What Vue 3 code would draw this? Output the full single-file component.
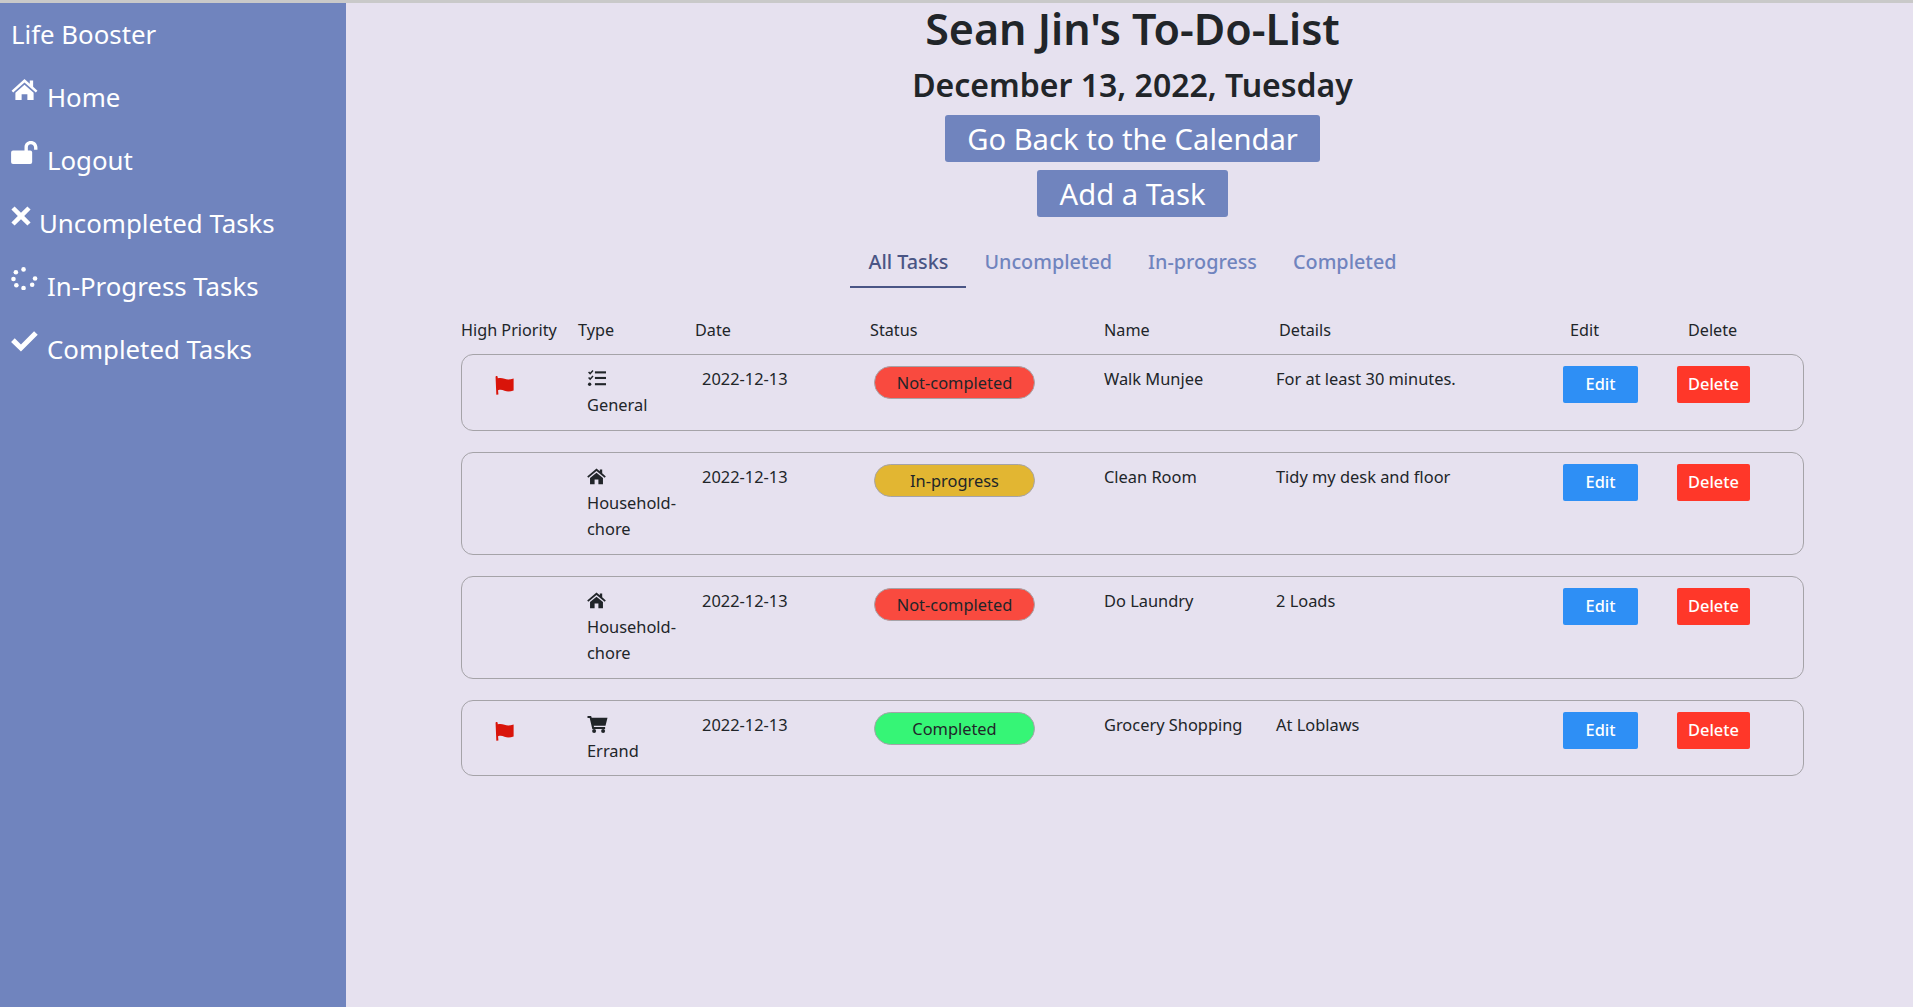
<script setup>
const navItems = [
  { label: "Home", icon: "home" },
  { label: "Logout", icon: "unlock" },
  { label: "Uncompleted Tasks", icon: "remove" },
  { label: "In-Progress Tasks", icon: "dots" },
  { label: "Completed Tasks", icon: "ok" },
];

const tabs = ["All Tasks", "Uncompleted", "In-progress", "Completed"];

const columns = ["High Priority", "Type", "Date", "Status", "Name", "Details", "Edit", "Delete"];

const tasks = [
  { id: 1, flag: true, icon: "list", type: "General", date: "2022-12-13", status: "Not-completed", statusClass: "not", name: "Walk Munjee", details: "For at least 30 minutes." },
  { id: 2, flag: false, icon: "house", type: "Household-chore", date: "2022-12-13", status: "In-progress", statusClass: "prog", name: "Clean Room", details: "Tidy my desk and floor" },
  { id: 3, flag: false, icon: "house", type: "Household-chore", date: "2022-12-13", status: "Not-completed", statusClass: "not", name: "Do Laundry", details: "2 Loads" },
  { id: 4, flag: true, icon: "cart", type: "Errand", date: "2022-12-13", status: "Completed", statusClass: "done", name: "Grocery Shopping", details: "At Loblaws" },
];
</script>

<template>
  <div class="page">
    <aside class="sidebar">
      <div class="brand">Life Booster</div>
      <a v-for="item in navItems" :key="item.label" class="nav__item">
        <svg v-if="item.icon === 'home'" class="nav__icon" viewBox="0 0 28 24" fill="#fff">
          <path d="M14 1 L19.5 6 V2.5 H23 V9.2 L27.5 13.2 L25.8 15 L14 4.6 L2.2 15 L.5 13.2 Z" />
          <path d="M14 7 L23.5 15.3 V23 H17 V17 H11 V23 H4.5 V15.3 Z" />
        </svg>
        <svg v-else-if="item.icon === 'unlock'" class="nav__icon" viewBox="0 0 28 24" fill="#fff">
          <rect x="0" y="10" width="22" height="14" rx="2" />
          <path d="M14 11 V6.5 C14 2.5 17 0 20.5 0 C24.5 0 27.5 2.8 27.5 7 V9 H24 V7 C24 4.8 22.5 3.4 20.5 3.4 C18.8 3.4 17.5 4.8 17.5 6.5 V11 Z" />
        </svg>
        <svg v-else-if="item.icon === 'remove'" class="nav__icon nav__icon--small" viewBox="0 0 20 20" fill="#fff">
          <path d="M3.6 .4 L10 6.8 L16.4 .4 L19.6 3.6 L13.2 10 L19.6 16.4 L16.4 19.6 L10 13.2 L3.6 19.6 L.4 16.4 L6.8 10 L.4 3.6 Z" />
        </svg>
        <svg v-else-if="item.icon === 'dots'" class="nav__icon" viewBox="0 0 28 24" fill="#fff">
          <circle cx="13" cy="2.5" r="2.4" />
          <circle cx="5" cy="5.5" r="2.4" />
          <circle cx="2.5" cy="12.5" r="2.4" />
          <circle cx="5.5" cy="19" r="2.4" />
          <circle cx="13" cy="22" r="2.4" />
          <circle cx="22" cy="18.5" r="2.4" />
          <circle cx="25" cy="12" r="2.4" />
        </svg>
        <svg v-else class="nav__icon" viewBox="0 0 28 24" fill="#fff">
          <path d="M0 12.5 L3.8 8.7 L10.3 15 L24 1.2 L27.8 5 L10.3 22.5 Z" />
        </svg>
        <span>{{ item.label }}</span>
      </a>
    </aside>

    <main class="content">
      <header class="head">
        <h1 class="title">Sean Jin's To-Do-List</h1>
        <h2 class="date">December 13, 2022, Tuesday</h2>
        <button class="btn-main">Go Back to the Calendar</button>
        <button class="btn-main btn-main--add">Add a Task</button>
      </header>

      <nav class="tabs">
        <a v-for="(tab, i) in tabs" :key="tab" class="tab" :class="{ 'tab--active': i === 0 }">{{ tab }}</a>
      </nav>

      <section class="table">
        <div class="table__head">
          <span v-for="col in columns" :key="col">{{ col }}</span>
        </div>

        <div v-for="task in tasks" :key="task.id" class="row">
          <div class="row__flag">
            <svg v-if="task.flag" class="flag" viewBox="0 0 20 20" fill="#d9140a">
              <path d="M.6 1 C.6 -.2 2.8 -.2 2.8 1 L2.9 2.4 C5.5 1.6 7.5 2 10 3 C13 4.2 16 3.8 19.6 2.6 V15.2 C16 16.4 13 16.6 10 15.4 C7.5 14.4 5.4 14.2 3.2 15 L3.6 19.6 L1.4 19.8 Z" />
            </svg>
          </div>
          <div class="row__type">
            <svg v-if="task.icon === 'list'" class="type-icon" viewBox="0 0 18 16" fill="#212529">
              <path d="M1 2.3 L2 1.4 L3 2.4 L5.2 0 L6.2 1 L3 4.4 Z M1 7.5 L2 6.6 L3 7.6 L5.2 5.2 L6.2 6.2 L3 9.6 Z" />
              <circle cx="2.5" cy="13.5" r="1.6" />
              <rect x="7.5" y="1.2" width="10.5" height="2" />
              <rect x="7.5" y="6.5" width="10.5" height="2" />
              <rect x="7.5" y="12.4" width="10.5" height="2" />
            </svg>
            <svg v-else-if="task.icon === 'house'" class="type-icon" viewBox="0 0 20 17" fill="#212529">
              <path d="M10 0 L13.5 3 V1 H16 V5.2 L19.8 8.4 L18.6 9.8 L10 2.6 L1.4 9.8 L.2 8.4 Z" />
              <path d="M10 4.6 L16.8 10.2 V16.6 H12 V11.6 H8 V16.6 H3.2 V10.2 Z" />
            </svg>
            <svg v-else class="type-icon type-icon--cart" viewBox="0 0 20 17" fill="#212529">
              <path d="M0 0 H3.6 L4.2 1.8 H20 L18 9.8 H6.2 L6.5 11 H17.6 V13 H4.8 L2.2 2 H0 Z" />
              <circle cx="6.6" cy="15" r="2" />
              <circle cx="15.6" cy="15" r="2" />
            </svg>
            <div class="type__label">{{ task.type }}</div>
          </div>
          <div>{{ task.date }}</div>
          <div><span class="pill" :class="'pill--' + task.statusClass">{{ task.status }}</span></div>
          <div>{{ task.name }}</div>
          <div>{{ task.details }}</div>
          <div><button class="action action--edit">Edit</button></div>
          <div><button class="action action--delete">Delete</button></div>
        </div>
      </section>
    </main>
  </div>
</template>

<style>
html,
body {
  margin: 0;
  background: #e6e1ef;
}
</style>

<style scoped>
.page {
  height: 1007px;
  box-sizing: border-box;
  border-top: 3px solid #c9c9c9;
  display: flex;
  overflow: hidden;
  font-family: "Noto Sans", sans-serif;
  color: #212529;
  background: #e6e1ef;
}

.sidebar {
  width: 346px;
  flex-shrink: 0;
  background: #7084be;
  color: #fff;
  padding: 0 0 0 11px;
  box-sizing: border-box;
}

.brand {
  font-size: 25.8px;
  line-height: 63px;
}

.nav__item {
  display: flex;
  align-items: flex-start;
  gap: 9px;
  height: 63px;
  font-size: 25.8px;
  line-height: 63px;
}

.nav__icon {
  width: 27px;
  height: 23px;
  margin-top: 12px;
  flex-shrink: 0;
}

.nav__icon--small {
  width: 20px;
  height: 20px;
  margin-top: 14px;
  margin-right: -1px;
}

.content {
  flex: 1;
  min-width: 0;
  padding: 0 109px 0 115px;
}

.head {
  display: flex;
  flex-direction: column;
  align-items: center;
}

.title {
  margin: 0;
  font-size: 43px;
  line-height: 52px;
  font-weight: 600;
}

.date {
  margin: 0;
  font-size: 32px;
  line-height: 60px;
  font-weight: 600;
}

.btn-main {
  height: 47px;
  padding: 0 22px;
  border: 0;
  border-radius: 3px;
  background: #7084be;
  color: #fff;
  font: inherit;
  font-size: 29.2px;
}

.btn-main--add {
  margin-top: 8px;
  padding: 0 23px;
}

.tabs {
  display: flex;
  justify-content: center;
  margin-top: 24px;
}

.tab {
  padding: 0 18px;
  height: 47px;
  line-height: 42px;
  font-size: 19.8px;
  font-weight: 500;
  color: #7084be;
  box-sizing: border-box;
}

.tab--active {
  color: #4a5585;
  border-bottom: 2px solid #4a5585;
}

.table {
  margin-top: 29px;
  font-size: 16.4px;
}

.table__head {
  display: grid;
  grid-template-columns: 117px 117px 175px 234px 175px 291px 118px 1fr;
  font-size: 16.2px;
  line-height: 26px;
  margin-bottom: 11px;
}

.row {
  display: grid;
  grid-template-columns: 125px 115px 172px 230px 172px 287px 114px 1fr;
  box-sizing: border-box;
  margin-bottom: 21px;
  padding: 11px 0;
  border: 1px solid #a5a3a8;
  border-radius: 12px;
  line-height: 26.5px;
}

.row__flag {
  padding-left: 33px;
}

.flag {
  width: 19px;
  height: 19px;
  margin-top: 10px;
  display: block;
}

.type-icon {
  display: block;
  width: 19px;
  height: 17px;
  margin-top: 4px;
  margin-bottom: 5px;
}

.type-icon--cart {
  width: 21px;
}

.pill {
  display: block;
  width: 161px;
  height: 33px;
  box-sizing: border-box;
  text-align: center;
  border: 1px solid #a5a3a8;
  border-radius: 17px;
  line-height: 31px;
}

.pill--not {
  background: #f94a3f;
}

.pill--prog {
  background: #e2b632;
}

.pill--done {
  background: #36f576;
}

.action {
  height: 37px;
  border: 0;
  border-radius: 2px;
  color: #fff;
  font: inherit;
  font-weight: 500;
  display: block;
}

.action--edit {
  width: 75px;
  background: #2e8ff5;
}

.action--delete {
  width: 73px;
  background: #ff3729;
}
</style>
